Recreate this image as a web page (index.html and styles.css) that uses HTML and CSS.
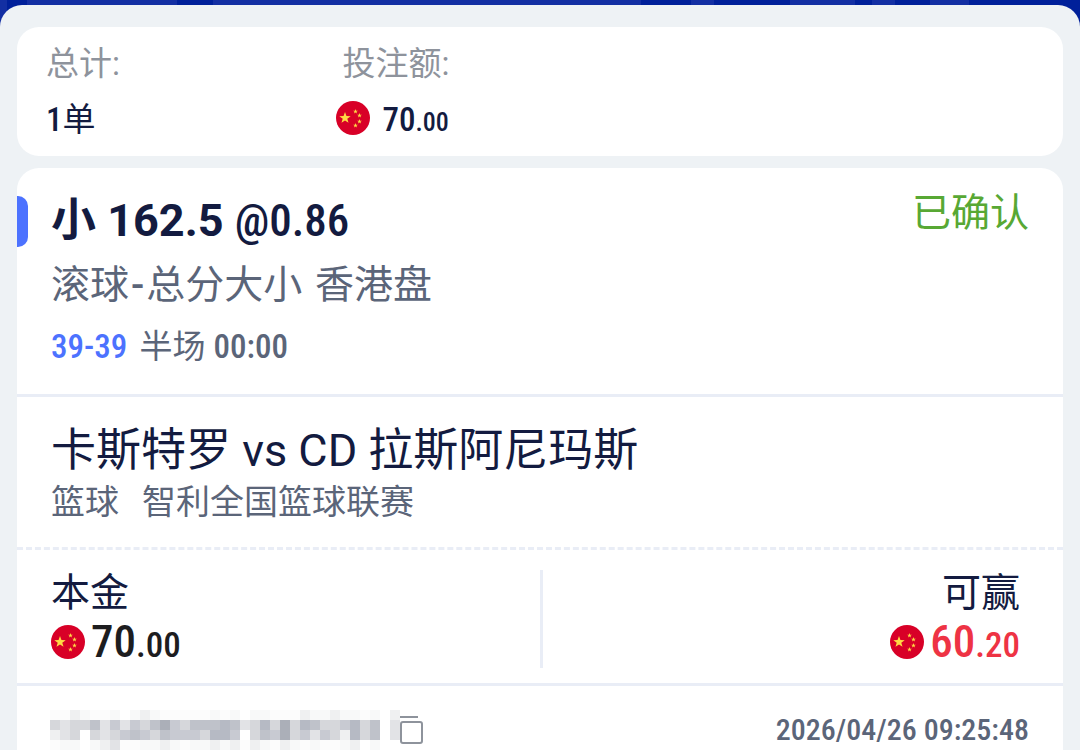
FILE: index.html
```
<!DOCTYPE html>
<html lang="zh-CN">
<head>
    <meta charset="UTF-8">
    <meta name="viewport" content="width=device-width, initial-scale=1">
    <title>注单详情</title>
    <link rel="stylesheet" href="styles.css">
</head>
<body>
    <svg width="0" height="0" class="defs" aria-hidden="true">
        <symbol id="star" viewBox="-10 -10 20 20">
            <path d="M0-10 2.4-3.2 9.5-3.1 3.8 1.2 5.9 8.1 0 4-5.9 8.1-3.8 1.2-9.5-3.1-2.4-3.2z"/>
        </symbol>
        <symbol id="flag" viewBox="0 0 34 34">
            <circle cx="17" cy="17" r="17" fill="#d80027"/>
            <g fill="#ffda44">
                <use href="#star" x="3" y="11" width="12" height="12"/>
                <use href="#star" x="17" y="8" width="5" height="5"/>
                <use href="#star" x="21" y="12" width="5" height="5"/>
                <use href="#star" x="21" y="18" width="5" height="5"/>
                <use href="#star" x="17" y="22" width="5" height="5"/>
            </g>
        </symbol>
    </svg>

    <main class="sheet">
        <section class="card summary">
            <div class="summary-item">
                <div class="summary-label">总计:</div>
                <div class="summary-value"><span class="num">1</span>单</div>
            </div>
            <div class="summary-item">
                <div class="summary-label">投注额:</div>
                <div class="summary-value amount">
                    <svg class="flag"><use href="#flag"/></svg>
                    <span class="num">70<small>.00</small></span>
                </div>
            </div>
        </section>

        <article class="card bet">
            <section class="pick">
                <div class="pick-info">
                    <h1 class="pick-title">小 162.5 <span class="num odds">@0.86</span></h1>
                    <p class="market">滚球<span class="dash">-</span>总分大小 <span class="odds-type">香港盘</span></p>
                    <p class="period"><span class="num score">39-39</span> 半场 <span class="num">00:00</span></p>
                </div>
                <span class="status">已确认</span>
            </section>

            <section class="match">
                <h2 class="teams">卡斯特罗 vs CD 拉斯阿尼玛斯</h2>
                <p class="league"><span>篮球</span><span>智利全国篮球联赛</span></p>
            </section>

            <section class="money">
                <div class="money-item">
                    <div class="money-label">本金</div>
                    <div class="money-value">
                        <svg class="flag"><use href="#flag"/></svg>
                        <span class="num">70<small>.00</small></span>
                    </div>
                </div>
                <div class="money-item win">
                    <div class="money-label">可赢</div>
                    <div class="money-value">
                        <svg class="flag"><use href="#flag"/></svg>
                        <span class="num">60<small>.20</small></span>
                    </div>
                </div>
            </section>

            <footer class="order">
                <svg class="order-id" id="orderId" viewBox="0 0 350 40"></svg>
                <button class="copy" type="button" aria-label="复制">
                    <svg viewBox="0 0 24 30" fill="none" stroke="#8e939c" stroke-width="2">
                        <path d="M0 2h18"/>
                        <rect x="1" y="7" width="21" height="21" rx="2"/>
                    </svg>
                </button>
                <time class="num">2026/04/26 09:25:48</time>
            </footer>
        </article>
    </main>

    <script src="script.js"></script>
</body>
</html>
```
FILE: styles.css
```
* {
    box-sizing: border-box;
}

body {
    margin: 0;
    padding-top: 5px;
    min-height: 100vh;
    font-family: Roboto, "Noto Sans CJK SC", sans-serif;
    color: #131b40;
    background: linear-gradient(90deg,
        #132fa3 7px, #00209a 7px 27px,
        #132fa3 27px 177px, #00209a 177px 213px,
        #132fa3 213px 641px, #00209a 641px 691px,
        #132fa3 691px 714px, #00209a 714px 790px,
        #132fa3 790px 855px, #00209a 855px 872px,
        #132fa3 872px 895px, #00209a 895px 930px,
        #132fa3 930px 969px, #00209a 969px);
}

h1, h2, p {
    margin: 0;
    font-weight: 400;
}

.defs {
    position: absolute;
}

.sheet {
    min-height: calc(100vh - 5px);
    padding: 22px 17px 0;
    background: #eef2f5;
    border-radius: 22px 22px 0 0;
}

.card {
    background: #fff;
    border-radius: 22px;
}

.num {
    font-family: "Roboto Condensed", "Liberation Sans Narrow", Roboto, sans-serif;
    font-weight: 500;
}

.flag {
    width: 34px;
    height: 34px;
    flex: none;
}

.summary {
    display: flex;
    padding: 13px 29px 12px;
    margin-bottom: 12px;
}

.summary-item {
    width: 30%;
}

.summary-label {
    font-size: 33px;
    line-height: 48px;
    color: #8e939c;
}

.summary-value {
    font-size: 33px;
    line-height: 48px;
    margin-top: 8px;
}

.amount {
    display: flex;
    gap: 12px;
    height: 48px;
    margin-left: -6px;
}

.amount .flag {
    margin-top: 5px;
}

.amount small {
    font-size: 26px;
    line-height: 1;
}

.bet {
    border-radius: 22px 22px 0 0;
}

.pick {
    display: flex;
    justify-content: space-between;
    padding: 20px 34px 16px 0;
    border-bottom: 3px solid #e9edf6;
}

.pick-info {
    padding-left: 34px;
}

.pick-title {
    position: relative;
    font-size: 45px;
    line-height: 66px;
    font-weight: 700;
}

.pick-title::before {
    content: "";
    position: absolute;
    left: -34px;
    top: 8px;
    width: 11px;
    height: 51px;
    background: #4c72ff;
    border-radius: 0 10px 10px 0;
}

.odds {
    font-weight: 500;
}

.market {
    font-size: 39px;
    line-height: 62px;
    color: #5b6579;
}

.dash {
    padding: 0 2px;
    font-weight: 500;
}

.odds-type {
    margin-left: 3px;
}

.period {
    font-size: 33px;
    line-height: 62px;
    color: #5b6579;
}

.score {
    margin-right: 4px;
    color: #4c72ff;
}

.status {
    font-size: 39px;
    line-height: 50px;
    color: #58a834;
}

.match {
    padding: 24px 34px;
    border-bottom: 3px dashed #e9edf6;
}

.teams {
    font-size: 45px;
    line-height: 60px;
}

.league {
    display: flex;
    gap: 23px;
    font-size: 34px;
    line-height: 42px;
    color: #5b6579;
}

.money {
    display: flex;
    padding: 20px 0 15px;
    border-bottom: 3px solid #e9edf6;
}

.money-item {
    flex: 0 0 50%;
    padding: 0 34px;
}

.money-label {
    font-size: 39px;
    line-height: 46px;
}

.money-value {
    display: flex;
    align-items: center;
    gap: 6px;
    height: 52px;
    font-size: 45px;
    line-height: 52px;
    color: #1d1d1f;
}

.money-value small {
    font-size: 35px;
    line-height: 1;
}

.win {
    display: flex;
    flex-direction: column;
    align-items: flex-end;
    padding-right: 43px;
    border-left: 3px solid #e9edf6;
}

.win .money-value {
    color: #ee3344;
}

.order {
    display: flex;
    align-items: center;
    padding: 24px 34px 0 33px;
    color: #5b6579;
}

.order-id {
    width: 350px;
    height: 40px;
}

.copy {
    padding: 0;
    border: none;
    background: none;
    cursor: pointer;
}

.copy svg {
    display: block;
    width: 24px;
    height: 30px;
}

.order time {
    margin-left: auto;
    font-size: 30px;
    line-height: 36px;
}
```
FILE: script.js
```
// masked order number, one digit per 10px cell (0 = white, 9 = darkest)
const shades = ['#fff', '#fcfcfc', '#f8f9f9', '#eff0f1', '#e2e3e6', '#d6d7db', '#c8cad2', '#bfc2ca', '#b6bac4', '#abafb8'];
const rows = [
    '11321120232111112120221113223221203',
    '54557464657965777874585958755685704',
    '34505456765766658860576956465385704',
    '12202341122321223231321321211230200'
];

const orderId = document.getElementById('orderId');

rows.forEach((row, y) => {
    [...row].forEach((level, x) => {
        const cell = document.createElementNS('http://www.w3.org/2000/svg', 'rect');
        cell.setAttribute('x', x * 10);
        cell.setAttribute('y', y * 10);
        cell.setAttribute('width', 10);
        cell.setAttribute('height', 10);
        cell.setAttribute('fill', shades[level]);
        orderId.appendChild(cell);
    });
});
```
